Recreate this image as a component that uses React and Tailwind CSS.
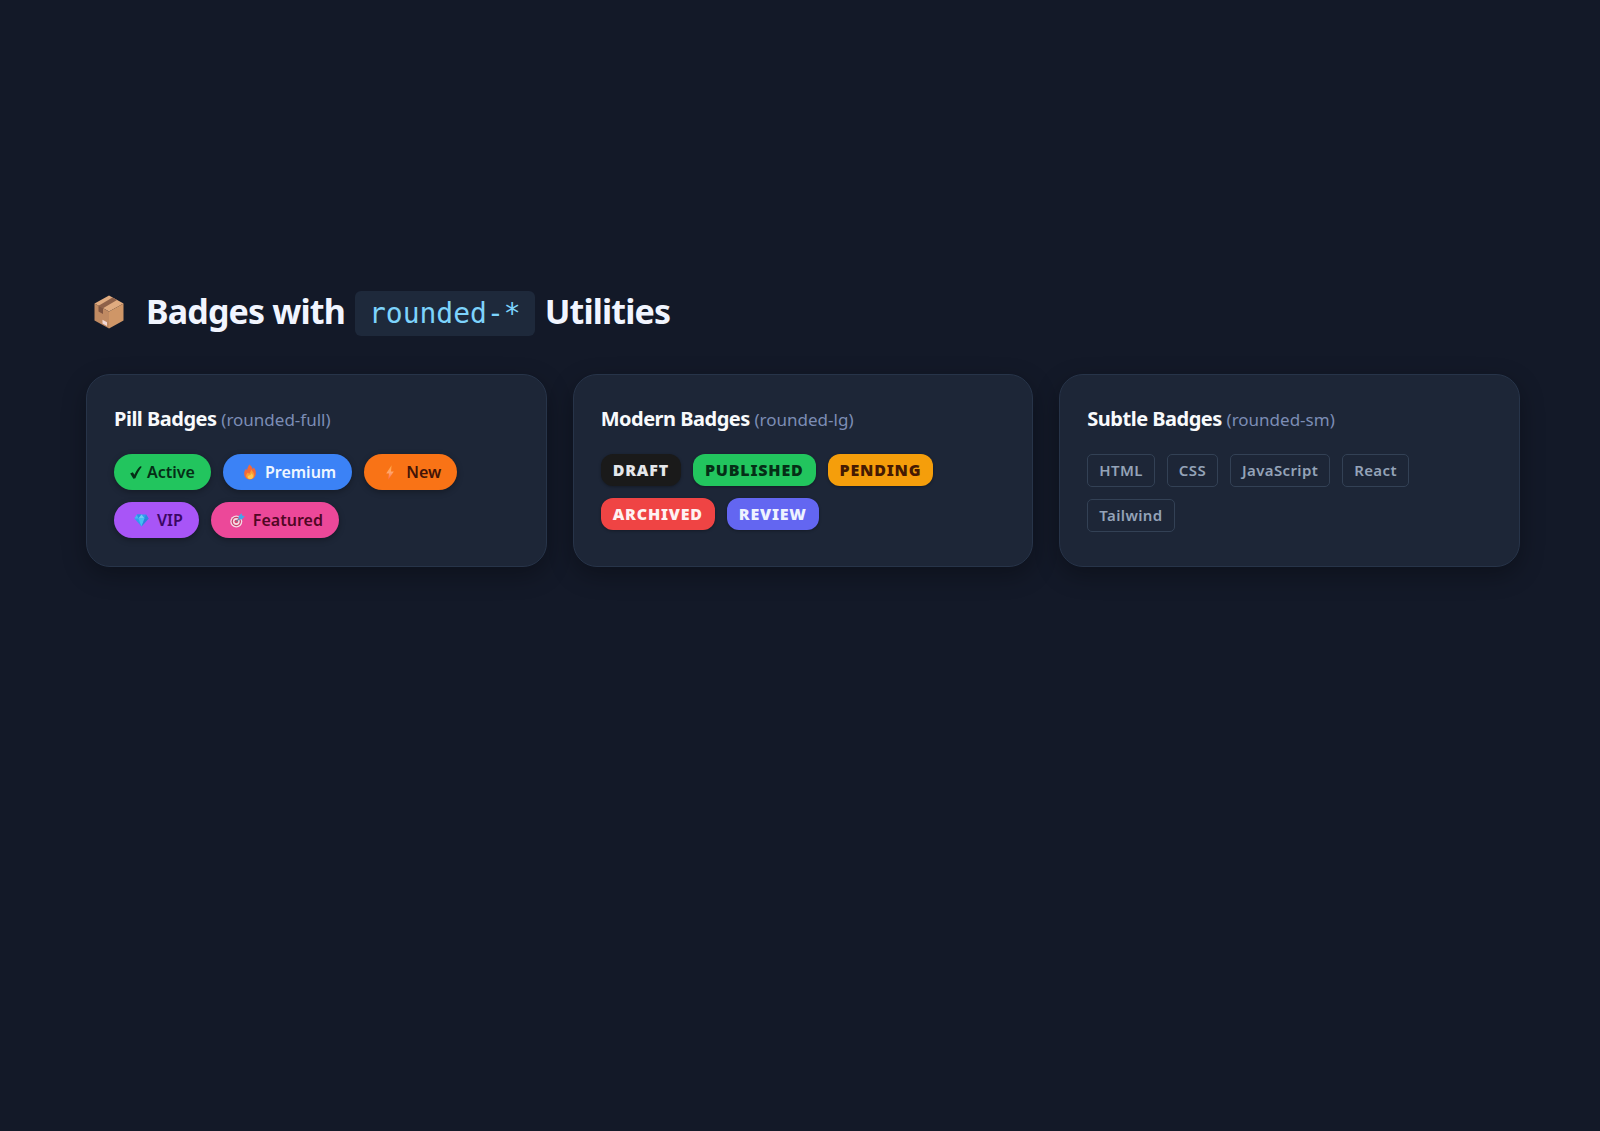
import React from 'react';
import clsx from 'clsx';

const PackageIcon = () => (
  <svg viewBox="0 0 30 34" className="mb-1 h-[34px] w-[30px]" aria-hidden="true">
    <path d="M15 0.5 29.5 8.5 15 16.5 0.5 8.5Z" fill="#e0ab80" />
    <path d="M0.5 8.5 15 16.5V33.5L0.5 25.5Z" fill="#c08a62" />
    <path d="M29.5 8.5 15 16.5V33.5L29.5 25.5Z" fill="#cf9667" />
    <path d="M18.5 2.5 23 5 9 13.2 4.5 10.7Z" fill="#8f6149" />
    <path d="M4.5 10.7 9 13.2V19L4.5 16.5Z" fill="#805541" />
    <path d="M8.5 24.8 13 27.2V31L8.5 28.5Z" fill="#f3d9d6" />
  </svg>
);

const CheckIcon = () => (
  <svg viewBox="0 0 12 13" className="h-[13px] w-3" aria-hidden="true">
    <path d="M0.2 7.6 2.8 6.3 4.5 8.8C6 5.2 7.8 2.4 10.2 0.2L11.8 0.8C9.2 4 7.2 7.8 5.4 12.3L3.4 12.7Z" fill="currentColor" />
  </svg>
);

const FireIcon = () => (
  <svg viewBox="0 0 14 16" className="h-4 w-3.5" aria-hidden="true">
    <path d="M6.5 0.5C8.5 2 9.2 3.5 9.6 5.2 10.3 4.7 10.5 4 10.5 3.2 12.5 5.2 13 7.5 12.8 9.8 12.5 13.3 10 15.5 7 15.5 3.8 15.5 1.4 13.3 1.2 10 1 7.8 2 6 3 4.6 3.2 5.5 3.5 6 4.1 6.5 4.3 4 5.2 2.2 6.5 0.5Z" fill="#f4693a" />
    <path d="M8 5.5C9.3 7.3 11.6 9 11.2 11.8 10.9 14 9.2 15.2 7 15.2 4.8 15.2 3.2 13.8 3.2 11.8 3.2 10.2 4.2 9.2 5 8.5 5.3 9.2 5.6 9.5 6.2 9.7 7.2 8.5 8 7.2 8 5.5Z" fill="#fb9f33" />
    <path d="M8.5 9.2C9.8 10.6 10.2 11.6 9.9 12.9 9.6 14.2 8.5 15 7.2 15 5.8 15 4.8 14.2 4.8 13 4.8 12.2 5.4 11.6 6 11.4 7.4 11.2 8.3 10.5 8.5 9.2Z" fill="#ffc84f" />
  </svg>
);

const BoltIcon = () => (
  <svg viewBox="0 0 8 15" className="h-[15px] w-2" aria-hidden="true">
    <defs>
      <linearGradient id="bolt" x1="0" y1="0" x2="0" y2="1">
        <stop offset="0" stopColor="#ffa63a" />
        <stop offset="0.5" stopColor="#ffa56c" />
        <stop offset="1" stopColor="#ff6550" />
      </linearGradient>
    </defs>
    <path d="M5.6 0.3 0.2 8.5H3L2.2 14.7 7.8 6.4H5Z" fill="url(#bolt)" />
  </svg>
);

const GemIcon = () => (
  <svg viewBox="0 0 15 13" className="h-[13px] w-[15px]" aria-hidden="true">
    <path d="M3 0.5H12L14.6 4.5 7.5 12.6 0.4 4.5Z" fill="#2f9df0" />
    <path d="M3 0.5 4.4 4.5H0.4Z" fill="#49b6f2" />
    <path d="M3 0.5H7.5L4.4 4.5Z" fill="#2c8fe8" />
    <path d="M7.5 0.5 10.6 4.5H4.4Z" fill="#6ccdf3" />
    <path d="M12 0.5 10.6 4.5H14.6Z" fill="#2f86dd" />
    <path d="M4.4 4.5H10.6L7.5 12.6Z" fill="#42c0f2" />
    <path d="M10.6 4.5H14.6L7.5 12.6Z" fill="#2f80dc" />
  </svg>
);

const TargetIcon = () => (
  <svg viewBox="0 0 15 15" className="size-[15px]" aria-hidden="true">
    <circle cx="6.3" cy="8.5" r="6" fill="#f5dbe6" />
    <circle cx="6.3" cy="8.5" r="4.7" fill="#c93f6b" />
    <circle cx="6.3" cy="8.5" r="3.4" fill="#f5dbe6" />
    <circle cx="6.3" cy="8.5" r="1.8" fill="#df3f67" />
    <path d="M6.3 8.5 10.5 4.3" stroke="#6783a5" strokeWidth="1.2" />
    <path d="M8.6 3.2 11.4 0.3 12.2 2.6 14.8 3.3 11.8 6.4 8.9 6Z" fill="#45a5e8" />
  </svg>
);

const PILLS = [
  { label: 'Active', icon: CheckIcon, spacing: 'gap-[5px] px-4', color: 'bg-[#22c55e] text-[#052e16]' },
  { label: 'Premium', icon: FireIcon, spacing: 'gap-2 pl-5 pr-4', color: 'bg-[#3b82f6] text-[#eff6ff]' },
  { label: 'New', icon: BoltIcon, spacing: 'gap-3 pl-[22px] pr-4', color: 'bg-[#f97316] text-[#431407]' },
  { label: 'VIP', icon: GemIcon, spacing: 'gap-2 pl-5 pr-4', color: 'bg-[#a855f7] text-[#3b0764]' },
  { label: 'Featured', icon: TargetIcon, spacing: 'gap-2 pl-[19px] pr-4', color: 'bg-[#ec4899] text-[#500724]' },
];

const MODERN = [
  { label: 'DRAFT', color: 'bg-[#1a1a1a] text-[#e5e7eb]' },
  { label: 'PUBLISHED', color: 'bg-[#22c55e] text-[#052e16]' },
  { label: 'PENDING', color: 'bg-[#f59e0b] text-[#451a03]' },
  { label: 'ARCHIVED', color: 'bg-[#ef4444] text-[#fef2f2]' },
  { label: 'REVIEW', color: 'bg-[#6366f1] text-[#eef2ff]' },
];

const SUBTLE = ['HTML', 'CSS', 'JavaScript', 'React', 'Tailwind'];

const Card = ({ title, utility, children }) => (
  <section className="rounded-3xl border border-[#273449] bg-[#1d2637] px-[27px] pt-[30px] pb-7 shadow-[0_8px_24px_rgba(0,0,0,0.3)]">
    <h2 className="mb-5 text-xl leading-7 font-bold tracking-tight text-slate-50">
      {title}{' '}
      <span className="text-[17px] font-normal tracking-normal text-[#7c8db5]">({utility})</span>
    </h2>
    <div className="flex flex-wrap gap-3">{children}</div>
  </section>
);

const App = () => {
  return (
    <main className="min-h-screen bg-[#131928] pt-[291px] pr-20 pb-20 pl-[86px] font-['Noto_Sans',sans-serif]">
      <h1 className="mb-[38px] flex flex-wrap items-center pl-2 text-[34px] leading-[41px] font-bold tracking-tight text-[#f1f5ff]">
        <PackageIcon />
        <span className="ml-[22px] pb-1">Badges with</span>
        <code className="mx-2.5 rounded-md bg-[#1e293b] px-3.5 font-['DejaVu_Sans_Mono',monospace] text-[28px] leading-[45px] font-normal tracking-normal text-[#7dd3fc]">
          rounded-*
        </code>
        <span className="pb-1">Utilities</span>
      </h1>

      <div className="grid gap-[26px] md:grid-cols-2 lg:grid-cols-3">
        <Card title="Pill Badges" utility="rounded-full">
          {PILLS.map(({ label, icon: Icon, spacing, color }) => (
            <span
              key={label}
              className={clsx(
                'inline-flex items-center rounded-full py-1.5 text-base leading-6 font-semibold shadow-[0_2px_6px_rgba(0,0,0,0.3)]',
                spacing,
                color
              )}>
              <Icon />
              {label}
            </span>
          ))}
        </Card>

        <Card title="Modern Badges" utility="rounded-lg">
          {MODERN.map(({ label, color }) => (
            <span
              key={label}
              className={clsx(
                'rounded-xl px-3 py-1.5 text-base leading-5 font-black tracking-wider shadow-[0_1px_3px_rgba(0,0,0,0.3)]',
                color
              )}>
              {label}
            </span>
          ))}
        </Card>

        <Card title="Subtle Badges" utility="rounded-sm">
          {SUBTLE.map((label) => (
            <span
              key={label}
              className="rounded-[5px] border border-[#334155] px-[11px] py-1.5 text-[15px] leading-[19px] font-semibold tracking-wide text-[#94a3b8]">
              {label}
            </span>
          ))}
        </Card>
      </div>
    </main>
  );
};

export default App;
